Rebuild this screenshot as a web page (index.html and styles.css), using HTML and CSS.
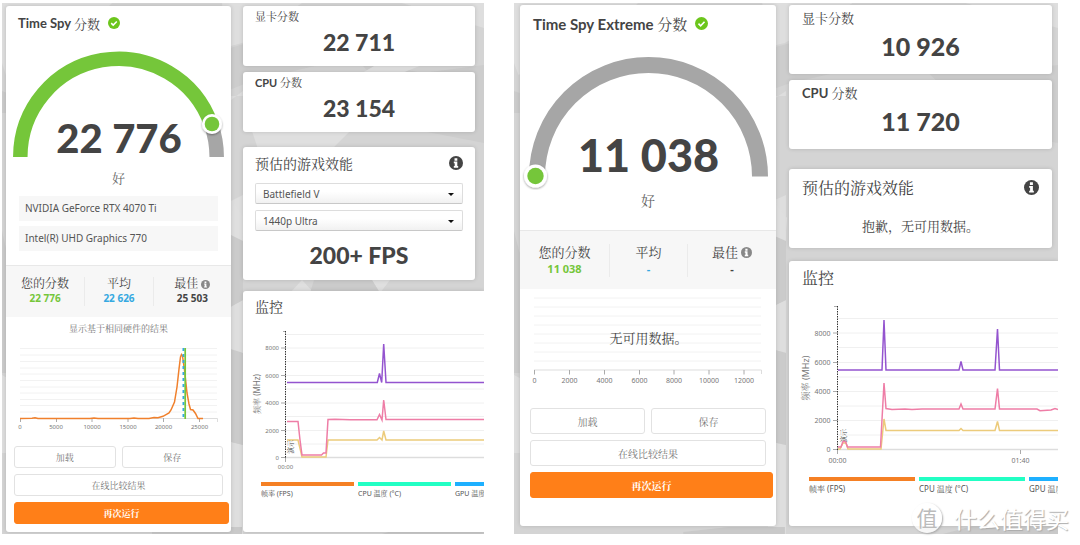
FILE: index.html
```html
<!DOCTYPE html>
<html lang="zh-CN">
<head>
<meta charset="utf-8">
<meta name="viewport" content="width=device-width, initial-scale=1">
<title>Time Spy</title>
<link rel="stylesheet" href="styles.css">
</head>
<body>
<svg class="defs" width="0" height="0" aria-hidden="true">
  <defs>
    <symbol id="facets" viewBox="0 0 482 531" preserveAspectRatio="none">
      <rect width="482" height="531" fill="#d4d4d4"/>
      <path d="M0 0H110L90 20 4 72 0 60ZM482 0V25L400 0ZM220 0H300L240 40 225 44ZM225 100L241 88V93H225ZM225 200L241 192V238L225 230ZM225 305L241 297V350L225 345ZM225 438L241 442V531H225ZM0 372L5 375V450H0Z" fill="#dedede"/>
      <path d="M225 46L245 40 275 62H360L420 128 482 140V62L420 70 350 55 300 66 245 80 225 88Z" fill="#cdcdcd"/>
      <path d="M250 128L256 146H330L348 128ZM374 62L360 70H400L420 62ZM232 200L242 215 240 240 226 232ZM300 277L288 290H312ZM370 277L378 290 388 277Z" fill="#dfdfdf"/>
      <path d="M225 230L241 238V297L225 306ZM225 345L241 350V442L225 438ZM0 88L5 90V110H0ZM0 228L5 250V370H0ZM312 277H370L378 290H308Z" fill="#cbcbcb"/>
      <path d="M150 529L190 524H240V531H150ZM410 522H482V531H380Z" fill="#c9c9c9"/>
    </symbol>
    <symbol id="info" viewBox="0 0 16 16">
      <circle cx="8" cy="8" r="8" fill="currentColor"/>
      <path d="M6.300 2.500h3.200v2.800H6.300zM5.500 6.300h4v5.100h1v2H5.500v-2h1V8.200h-1z" fill="#fff"/>
    </symbol>
    <symbol id="check" viewBox="0 0 12 12">
      <circle cx="6" cy="6" r="6" fill="#6cc61c"/>
      <path d="M3.200 6.100l2 2 3.600-3.700" fill="none" stroke="#fff" stroke-width="1.500"/>
    </symbol>
    <filter id="lift" x="-30%" y="-30%" width="160%" height="160%">
      <feDropShadow dx="0" dy="1" stdDeviation="1" flood-color="#000" flood-opacity=".4"/>
    </filter>
  </defs>
</svg>

<main class="page">
  <section class="panel panel-spy">
    <svg class="backdrop" aria-hidden="true"><use href="#facets" width="100%" height="100%"/></svg>

    <article class="card result">
      <h2 class="title">Time Spy <span class="cjk">分数</span><svg class="check"><use href="#check"/></svg></h2>
      <svg class="figure" viewBox="6 40 225 128">
        <path d="M20.3 157A98.2 98.2 0 0 1 211 124" fill="none" stroke="#75c63a" stroke-width="14.5"/>
        <path d="M211 124A98.2 98.2 0 0 1 216.7 157" fill="none" stroke="#a6a6a6" stroke-width="14.5"/>
        <circle cx="212" cy="124" r="10" fill="#fff" filter="url(#lift)"/>
        <circle cx="212" cy="124" r="7.3" fill="#75c63a"/>
        <text class="score" x="119" y="153" font-size="40">22 776</text>
      </svg>
      <p class="grade">好</p>
      <ul class="hardware">
        <li>NVIDIA GeForce RTX 4070 Ti</li>
        <li>Intel(R) UHD Graphics 770</li>
      </ul>
      <dl class="stats">
        <div><dt>您的分数</dt><dd class="own">22 776</dd></div>
        <div><dt>平均</dt><dd class="average">22 626</dd></div>
        <div><dt>最佳<svg class="info-small"><use href="#info"/></svg></dt><dd>25 503</dd></div>
      </dl>
      <p class="caption">显示基于相同硬件的结果</p>
      <svg class="figure ticks" viewBox="6 340 225 95" font-size="6">
        <path d="M20 348.500H217M20 355H217M20 361.500H217M20 368H217M20 380.500H217M20 393H217M20 405.500H217M20 374H217M20 387H217M20 399.500H217M20 412H217" stroke="#f2f2f2"/>
        <path d="M20 418.500H217.500V422" fill="none" stroke="#ddd"/>
        <path d="M20.500 418V422M56.500 418V422M92 418V422M128 418V422M163.500 418V422M199.500 418V422" stroke="#aaa"/>
        <path d="M20 418.500L32 418.300 35 417.800 38 418.500H90L94 418 98 418.500H130L134 418 138 418.500H149L154 417.500 158 417.800 163 416.300 169 413 171 410 174.500 402 177 387 179 369 180.500 357 181.500 354.500 182.500 356 184.500 370 187 393 189 404 190.500 409.500 193 410 195.500 413.500 198 418.500H203" fill="none" stroke="#f0802c" stroke-width="1.500"/>
        <path d="M183.500 348V419" stroke="#36a9e1" stroke-width="2" stroke-dasharray="3 3"/>
        <path d="M185.200 348V419" stroke="#75c63a" stroke-width="1.700"/>
        <text x="20" y="429">0</text><text x="56" y="429">5000</text><text x="92" y="429">10000</text><text x="128" y="429">15000</text><text x="163.500" y="429">20000</text><text x="199.500" y="429">25000</text>
      </svg>
      <div class="actions">
        <div class="pair"><button type="button">加载</button><button type="button">保存</button></div>
        <button type="button" class="compare">在线比较结果</button>
        <button type="button" class="primary">再次运行</button>
      </div>
    </article>

    <div class="side">
      <article class="card part"><h3>显卡分数</h3><p>22 711</p></article>
      <article class="card part"><h3>CPU <span class="cjk">分数</span></h3><p>23 154</p></article>
      <article class="card games">
        <header><h2>预估的游戏效能</h2><svg class="info"><use href="#info"/></svg></header>
        <div class="choice"><select aria-label="游戏"><option>Battlefield V</option></select></div>
        <div class="choice"><select aria-label="画质"><option>1440p Ultra</option></select></div>
        <p class="fps">200+ FPS</p>
      </article>
      <article class="card monitor">
        <h2>监控</h2>
        <svg class="figure ticks" viewBox="243 323 241 153" font-size="6">
          <path d="M286 334.500H484M286 348H484M286 361.500H484M286 375.500H484M286 389H484M286 403H484M286 416.500H484M286 430.500H484M286 444H484" stroke="#f0f0f0"/>
          <path d="M286 457.500H484" stroke="#ddd" stroke-width="1.500"/>
          <path d="M281 348H286M281 375.500H286M281 403H286M281 430.500H286M281 457.500H286M285.500 458V462M283 331.500H285" stroke="#aaa"/>
          <path d="M285.500 331V458" stroke="#333" stroke-dasharray="1.500 1"/>
          <g class="series">
            <path d="M287 440H298L302 457H326L328 440H377L379.500 437.500 382 440 383.700 431 386 440H484" stroke="#eccb7b"/>
            <path d="M287 421.500H298L300 440 302 455H321.500L323.500 453H326L328 419.500 335 419.200 350 419.800H377L379.500 414.500 382 420 383.700 400 386 419.500H484" stroke="#ee7da6"/>
            <path d="M287 382.500H377.300L379.500 373.500 381.700 382.500 383.700 344 386 382.500H484" stroke="#9454cf"/>
          </g>
          <g class="end"><text x="279" y="350">8000</text><text x="279" y="377.500">6000</text><text x="279" y="405">4000</text><text x="279" y="432.500">2000</text><text x="279" y="459.500">0</text></g>
          <text x="285.500" y="469">00:00</text>
          <text class="strong" font-size="7" transform="translate(293 447) rotate(-90)">演示</text>
          <text font-size="8" transform="translate(260 394) rotate(-90)">频率 (MHz)</text>
        </svg>
        <ul class="legend"><li class="orange">帧率 (FPS)</li><li class="teal">CPU 温度 (°C)</li><li class="blue">GPU 温度</li></ul>
      </article>
    </div>
  </section>

  <section class="panel panel-extreme">
    <svg class="backdrop" aria-hidden="true"><use href="#facets" width="100%" height="100%"/></svg>

    <article class="card result">
      <h2 class="title">Time Spy Extreme <span class="cjk">分数</span><svg class="check"><use href="#check"/></svg></h2>
      <svg class="figure" viewBox="520 42 256 148">
        <path d="M537 176.500A111.500 111.500 0 0 1 760 176.500" fill="none" stroke="#a6a6a6" stroke-width="16"/>
        <circle cx="535.500" cy="176" r="11.500" fill="#fff" filter="url(#lift)"/>
        <circle cx="535.500" cy="176" r="8.200" fill="#75c63a"/>
        <text class="score" x="648.500" y="172" font-size="45">11 038</text>
      </svg>
      <p class="grade">好</p>
      <dl class="stats">
        <div><dt>您的分数</dt><dd class="own">11 038</dd></div>
        <div><dt>平均</dt><dd class="average">-</dd></div>
        <div><dt>最佳<svg class="info-small"><use href="#info"/></svg></dt><dd>-</dd></div>
      </dl>
      <svg class="figure ticks" viewBox="520 289 256 97" font-size="7">
        <path d="M534 298H761M534 307H761M534 316H761M534 325H761M534 334H761M534 343H761M534 352H761M534 361H761" stroke="#f2f2f2"/>
        <path d="M534 370H761.500V374" fill="none" stroke="#ddd"/>
        <path d="M534.500 370V374.500M569.500 370V374.500M604.500 370V374.500M639.500 370V374.500M674 370V374.500M709 370V374.500M744 370V374.500" stroke="#aaa"/>
        <text x="534.500" y="382.500">0</text><text x="569.500" y="382.500">2000</text><text x="604.500" y="382.500">4000</text><text x="639.500" y="382.500">6000</text><text x="674" y="382.500">8000</text><text x="709" y="382.500">10000</text><text x="744" y="382.500">12000</text>
        <text class="strong" x="648.500" y="343" font-size="13">无可用数据。</text>
      </svg>
      <div class="actions">
        <div class="pair"><button type="button">加载</button><button type="button">保存</button></div>
        <button type="button" class="compare">在线比较结果</button>
        <button type="button" class="primary">再次运行</button>
      </div>
    </article>

    <div class="side">
      <article class="card part"><h3>显卡分数</h3><p>10 926</p></article>
      <article class="card part"><h3>CPU <span class="cjk">分数</span></h3><p>11 720</p></article>
      <article class="card games">
        <header><h2>预估的游戏效能</h2><svg class="info"><use href="#info"/></svg></header>
        <p class="message">抱歉，无可用数据。</p>
      </article>
      <article class="card monitor">
        <h2>监控</h2>
        <svg class="figure ticks" viewBox="789 295 269 175" font-size="7">
          <path d="M838 318.500H1058M838 333H1058M838 347.500H1058M838 362.500H1058M838 377H1058M838 391.500H1058M838 406H1058M838 420.500H1058M838 435H1058" stroke="#f0f0f0"/>
          <path d="M838 449.500H1058" stroke="#ddd" stroke-width="1.500"/>
          <path d="M833 333H838M833 362.500H838M833 391.500H838M833 420.500H838M833 449.500H838M837.500 450V454M1020.500 450V454M834 306.500H837" stroke="#aaa"/>
          <path d="M837.500 306V450" stroke="#333" stroke-dasharray="1.500 1"/>
          <text class="strong" font-size="7" transform="translate(846 436) rotate(-90)">演示</text>
          <g class="series">
            <path d="M838 449H840L843 443 846 443 848 449H881L884 419 886 430.500H959L961 428.500 963 430.500H995L997.500 421.500 999.500 430.500H1058" stroke="#eccb7b"/>
            <path d="M838 447H841L843 441.500H845.500L847.500 447H880.500L884 383 886 408.500 892 409.500 905 409 912 409.500 922 409H959L961 404 963 409H995L997.500 388.500 999.500 409H1037L1040 410.700 1051 410 1055 408.500 1058 409.500" stroke="#ee7da6"/>
            <path d="M838 370H882L884 320 886 370H959L961 361.500 963 370H995L997.500 329 999.500 370H1058" stroke="#9454cf"/>
          </g>
          <g class="end"><text x="830.500" y="335.500">8000</text><text x="830.500" y="365">6000</text><text x="830.500" y="394">4000</text><text x="830.500" y="423">2000</text><text x="830.500" y="452">0</text></g>
          <text x="837.500" y="462.500">00:00</text><text x="1020.500" y="462.500">01:40</text>
          <text font-size="9" transform="translate(809 378) rotate(-90)">频率 (MHz)</text>
        </svg>
        <ul class="legend"><li class="orange">帧率 (FPS)</li><li class="teal">CPU 温度 (°C)</li><li class="blue">GPU 温度</li></ul>
      </article>
    </div>
  </section>

  <div class="brand"><span class="seal">值</span><span>什么值得买</span></div>
</main>
</body>
</html>
```

FILE: styles.css
```css
* { box-sizing: border-box; margin: 0; padding: 0; }

body {
  background: #fff;
  color: #444;
  font-family: "Noto Sans", "Noto Serif CJK SC", "Noto Sans CJK SC", sans-serif;
  font-size: 10px;
}

ul { list-style: none; }

.defs { display: block; }

.page {
  position: relative;
  display: grid;
  grid-template-columns: 482fr 544fr;
  gap: 30px;
  padding: 3px 22px 11px 2px;
}

.panel {
  position: relative;
  display: grid;
  overflow: hidden;
  background: #d4d4d4;
}

.panel-spy {
  --label: 11px;
  --heading: 14px;
  grid-template-columns: 225fr 232fr;
  gap: 12px;
  padding: 3px 9px 2px 4px;
}

.panel-extreme {
  --label: 13px;
  --heading: 16px;
  grid-template-columns: 256fr 263fr;
  gap: 13px;
  padding: 2px 6px 8px 6px;
}

.backdrop {
  position: absolute;
  inset: 0;
  width: 100%;
  height: 100%;
}

.card {
  position: relative;
  background: #fff;
  border-radius: 3px;
  box-shadow: 0 0 4px rgba(0, 0, 0, .15);
}

.figure { display: block; width: 100%; height: auto; }

h2, h3 {
  font-family: Lato, "Noto Serif CJK SC", "Noto Sans CJK SC", sans-serif;
  font-weight: 400;
}

/* Result card */
.title { display: flex; align-items: center; font-weight: 700; white-space: pre; }
.cjk { font-weight: 400; }
.check { width: 12px; height: 12px; margin-left: 8px; }

.score {
  font-family: Lato, sans-serif;
  font-weight: 900;
  text-anchor: middle;
  fill: #444;
}

.grade { text-align: center; color: #666; }

.hardware { display: grid; gap: 5px; margin: 7px 13px 14px; }
.hardware li { padding-left: 6px; line-height: 25px; background: #f7f7f7; color: #555; }

.stats {
  display: grid;
  grid-template-columns: 8fr 7fr 8fr;
  background: #f7f7f7;
  border-top: 1px solid #e8e8e8;
  text-align: center;
}
.stats div + div { border-left: 1px solid #ebebeb; }
.stats dt { display: flex; justify-content: center; align-items: center; }
.stats dd { font-weight: 700; }
.own { color: #75c63a; }
.average { color: #36a9e1; }
.info-small { width: 9px; height: 9px; margin-left: 3px; color: #888; }

.caption { text-align: center; line-height: 23px; color: #777; font-size: 9px; }

.actions { display: grid; gap: 6px; }
.pair { display: grid; grid-template-columns: 1fr 1fr; gap: 6px; }

button {
  background: #fff;
  border: 1px solid #e2e2e2;
  border-radius: 3px;
  color: #777;
  font-family: inherit;
}
button.primary { background: #ff7f18; border-color: #ff7f18; color: #fff; font-weight: 700; }

.panel-spy .title { height: 34px; padding-left: 12px; font-size: 13px; }
.panel-spy .grade { font-size: 13px; line-height: 21px; }
.panel-spy .stats { padding: 11px 0; }
.panel-spy .stats dt { font-size: 12px; line-height: 14px; }
.panel-spy .stats dd { line-height: 15px; }
.panel-spy .actions { padding: 11px 2px 8px 8px; }
.panel-spy button { height: 22px; font-size: 9px; }
.panel-spy .pair, .panel-spy .compare { margin-right: 6px; }

.panel-extreme .title { height: 37px; padding-left: 13px; font-size: 15px; }
.panel-extreme .check { width: 13px; height: 13px; }
.panel-extreme .grade { font-size: 14px; line-height: 22px; margin-bottom: 18px; }
.panel-extreme .stats { padding: 13px 0 12px; }
.panel-extreme .stats dt { font-size: 13px; line-height: 17px; }
.panel-extreme .stats dd { font-size: 11px; line-height: 16px; }
.panel-extreme .info-small { width: 11px; height: 11px; }
.panel-extreme .actions { padding: 22px 3px 28px 10px; }
.panel-extreme button { height: 26px; font-size: 10px; }
.panel-extreme .pair, .panel-extreme .compare { margin-right: 7px; }

/* Side column */
.side { display: flex; flex-direction: column; min-width: 0; }
.part + .part { margin-top: 6px; }
.part h3 { font-size: var(--label); font-weight: 700; }
.part:first-child h3 { font-weight: 400; }
.part p, .fps { font-family: Lato, sans-serif; font-weight: 900; text-align: center; }

.panel-spy .part { padding: 0 12px 10px; }
.panel-spy .part h3 { line-height: 22px; }
.panel-spy .part p { font-size: 23px; line-height: 28px; }
.panel-extreme .part { padding: 0 13px 13px; }
.panel-extreme .part h3 { line-height: 26px; }
.panel-extreme .part p { font-size: 25px; line-height: 30px; }

.games header { display: flex; justify-content: space-between; align-items: center; }
.games h2, .monitor h2 { font-size: var(--heading); }
.info { width: 14px; height: 14px; color: #444; }

.panel-spy .games { margin: 15px 0 11px; padding: 0 12px; }
.panel-spy .games header { height: 32px; margin-bottom: 4px; }
.panel-extreme .games { margin: 20px 0 13px; padding: 0 13px; }
.panel-extreme .games header { height: 36px; }
.panel-extreme .info { width: 15px; height: 15px; }

.choice { position: relative; height: 21px; }
.choice + .choice { margin-top: 6px; }
.choice::after {
  content: "";
  position: absolute;
  right: 9px;
  top: 10px;
  border: 3px solid transparent;
  border-top-color: #111;
  pointer-events: none;
}
select {
  appearance: none;
  width: 100%;
  height: 100%;
  padding-left: 7px;
  border: 1px solid #ddd;
  border-bottom-color: #c8c8c8;
  border-radius: 2px;
  background: linear-gradient(#fff 40%, #f1f1f1);
  color: #555;
  font-family: inherit;
  font-size: 10px;
}
.fps { font-size: 23px; line-height: 49px; }
.message { font-size: 13px; line-height: 43px; text-align: center; }

.monitor { flex: 1; overflow: hidden; }
.panel-spy .monitor { margin-right: -9px; border-radius: 3px 0 0 3px; }
.panel-extreme .monitor { margin-right: -6px; border-radius: 3px 0 0 3px; }
.panel-spy .monitor h2 { padding-left: 12px; line-height: 32px; }
.panel-extreme .monitor h2 { padding-left: 13px; line-height: 34px; }

.ticks text { fill: #777; text-anchor: middle; }
.ticks .end text { text-anchor: end; }
.ticks text.strong { fill: #444; }
.series path { fill: none; stroke-width: 1.5; }

.legend { display: flex; gap: 4px; color: #555; white-space: nowrap; }
.legend li { flex: none; border-top: 4px solid; line-height: 15px; }
.legend .orange { border-color: #f58024; }
.legend .teal { border-color: #22ffc4; }
.legend .blue { border-color: #1eb0ff; }
.panel-spy .legend { padding: 6px 0 0 18px; font-size: 7px; }
.panel-spy .legend li { width: 93px; }
.panel-extreme .legend { padding: 7px 0 0 20px; font-size: 8px; }
.panel-extreme .legend li { width: 106px; }

/* Site mark over the lower right corner */
.brand {
  position: absolute;
  right: 11px;
  bottom: 11px;
  display: flex;
  align-items: center;
  gap: 12px;
  color: #fff;
  font-family: "Noto Sans CJK SC", sans-serif;
  font-size: 23px;
  line-height: 32px;
  text-shadow: 1px 1px 1px #aaa;
}
.seal {
  width: 30px;
  height: 30px;
  border-radius: 50%;
  background: rgba(255, 255, 255, .8);
  box-shadow: 1px 1px 2px #aaa;
  color: #bbb;
  text-align: center;
  text-shadow: none;
  font-size: 21px;
  line-height: 29px;
}
```
